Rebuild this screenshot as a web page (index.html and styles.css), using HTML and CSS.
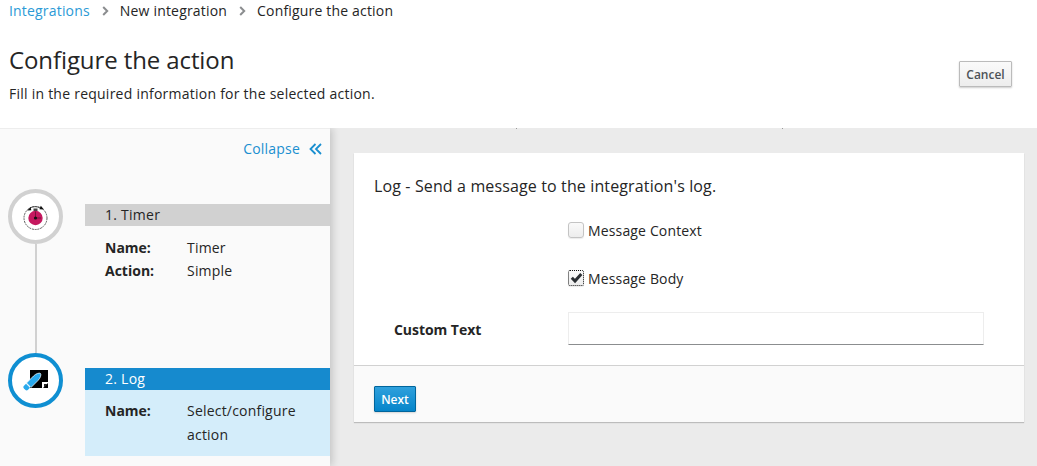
FILE: index.html
```html
<!DOCTYPE html>
<html lang="en">
<head>
<meta charset="utf-8">
<title>Configure the action</title>
<link rel="stylesheet" href="styles.css">
</head>
<body>
<header class="page-head">
  <nav class="crumbs">
    <a class="crumb-link">Integrations</a>
    <svg class="crumb-sep" width="7" height="10" viewBox="0 0 7 10"><path d="M1.200 1 5.200 5 1.200 9" fill="none" stroke="#8b8d8f" stroke-width="2"/></svg>
    <span>New integration</span>
    <svg class="crumb-sep" width="7" height="10" viewBox="0 0 7 10"><path d="M1.200 1 5.200 5 1.200 9" fill="none" stroke="#8b8d8f" stroke-width="2"/></svg>
    <span>Configure the action</span>
  </nav>
  <div class="title-row">
    <div>
      <h1>Configure the action</h1>
      <p class="subtitle">Fill in the required information for the selected action.</p>
    </div>
    <button class="btn btn-default">Cancel</button>
  </div>
</header>
<main class="workspace">
  <aside class="sidebar">
    <div class="collapse-row">
      <span>Collapse</span>
      <svg class="collapse-icon" width="13" height="12" viewBox="0 0 13 12"><path d="M6.500 1 1.500 6l5 5M12 1 7 6l5 5" fill="none" stroke="#1a8fd0" stroke-width="1.800"/></svg>
    </div>
    <section class="step step-one">
      <div class="rail">
        <div class="node">
          <svg width="28" height="28" viewBox="0 0 28 28">
            <circle cx="13.500" cy="15" r="11.500" fill="none" stroke="#333" stroke-width=".8" stroke-dasharray="2 .8"/>
            <path d="M8 5c3-1.800 7-1.800 10 0" fill="none" stroke="#333" stroke-width=".8"/>
            <path d="M22 6.500 17.500 6.300 18.800 2.800z" fill="#111"/>
            <path d="M5.300 7.500 9.300 7.300 8.600 4z" fill="#111"/>
            <rect x="11.500" y="5.500" width="4" height="2.500" fill="#444"/>
            <circle cx="13.500" cy="15" r="7.200" fill="#c5185f"/>
            <path d="M13.500 15h5.500M13.500 15v-6.500" stroke="#5a0c2e" stroke-width=".7"/>
            <circle cx="13.500" cy="15" r="1.600" fill="#111"/>
          </svg>
        </div>
        <div class="line"></div>
      </div>
      <div class="info">
        <div class="bar bar-grey">1. Timer</div>
        <dl class="details">
          <dt>Name:</dt><dd>Timer</dd>
          <dt>Action:</dt><dd>Simple</dd>
        </dl>
      </div>
    </section>
    <section class="step step-two">
      <div class="rail">
        <div class="node node-active">
          <svg width="26" height="24" viewBox="0 0 26 24">
            <rect x="7" y="1" width="18" height="18" fill="#000"/>
            <path d="M19 19v-6h6v1l-5 5z" fill="#fff"/>
            <path d="M21 15h3.500L21 18.500z" fill="#222"/>
            <path d="M3.500 14 10.500 7c2.500-2.500 6-3.500 7-2.500s0 4.500-2.500 7L8 18.500z" fill="#29a9ec" stroke="#fff" stroke-width=".7"/>
            <path d="M.8 17 3 14.800 7 18.800 4.800 21c-.7.600-1.600.600-2.300 0L.8 19.300c-.6-.7-.6-1.600 0-2.300z" fill="#29a9ec"/>
          </svg>
        </div>
      </div>
      <div class="info">
        <div class="bar bar-blue">2. Log</div>
        <dl class="details details-active">
          <dt>Name:</dt><dd>Select/configure action</dd>
        </dl>
      </div>
    </section>
  </aside>
  <section class="content">
    <div class="card">
      <div class="card-body">
        <h2>Log - Send a message to the integration's log.</h2>
        <div class="check-row">
          <span class="checkbox"></span>
          <span>Message Context</span>
        </div>
        <div class="check-row check-row-second">
          <span class="checkbox checkbox-on">
            <svg width="13" height="12" viewBox="0 0 13 12"><path d="M1.800 5.800 5 9 11.300 2" fill="none" stroke="#2b2f33" stroke-width="3"/></svg>
          </span>
          <span>Message Body</span>
        </div>
        <div class="field-row">
          <label>Custom Text</label>
          <input class="text-input" type="text">
        </div>
      </div>
      <div class="card-foot">
        <button class="btn btn-primary">Next</button>
      </div>
    </div>
  </section>
</main>
</body>
</html>
```
FILE: styles.css
```css
* { box-sizing: border-box; }
html, body { margin: 0; height: 466px; overflow: hidden; }
body {
  font-family: "Open Sans", sans-serif;
  font-size: 14px;
  letter-spacing: .15px;
  color: #252525;
  background: #fff;
  display: flex;
  flex-direction: column;
}
.page-head { height: 128px; padding: 0 25px 0 9px; flex: none; }
.crumbs { display: flex; align-items: center; height: 21px; gap: 11px; line-height: 21px; letter-spacing: .18px; }
.crumb-link { color: #2b9ad6; }
.crumb-sep { margin-left: 1px; }
.title-row { display: flex; justify-content: space-between; align-items: flex-start; }
h1 { margin: 0; padding-top: 22px; font-size: 24px; font-weight: 400; line-height: 33px; letter-spacing: -.1px; color: #252525; }
.subtitle { margin: 8px 0 0; line-height: 19px; letter-spacing: .24px; }
.btn {
  font-family: inherit;
  font-size: 12px;
  font-weight: 600;
  letter-spacing: 0;
  border-radius: 1px;
  border: 1px solid;
  cursor: pointer;
}
.btn-default {
  margin-top: 40px;
  width: 53px;
  height: 26px;
  padding: 0;
  color: #4d5258;
  background: linear-gradient(#fafafa, #ededed);
  border-color: #bbb;
  box-shadow: 0 1px 2px rgba(0,0,0,.2);
}
.workspace {
  flex: 1;
  display: flex;
  min-height: 0;
  overflow: hidden;
  background: linear-gradient(#999, #999) 516px 0 / 1px 1px no-repeat,
              linear-gradient(#999, #999) 782px 0 / 1px 1px no-repeat,
              #ebebeb;
}
.sidebar {
  width: 330px;
  flex: none;
  background: #fafafa;
  border-top: 1px solid #ededed;
  box-shadow: 2px 0 8px rgba(0,0,0,.18);
  padding-left: 8px;
}
.collapse-row {
  display: flex;
  justify-content: flex-end;
  align-items: center;
  gap: 9px;
  height: 41px;
  padding: 0 8px 3px 0;
  color: #1a8fd0;
  line-height: 19px;
  letter-spacing: .2px;
}
.collapse-icon { margin-top: 2px; }
.step { display: flex; }
.step-one { margin-top: 19px; height: 164px; }
.rail { width: 77px; flex: none; display: flex; flex-direction: column; }
.node {
  width: 55px;
  height: 55px;
  flex: none;
  border: 4px solid #d1d1d1;
  border-radius: 50%;
  background: #fff;
  display: flex;
  align-items: center;
  justify-content: center;
}
.node-active { border-color: #0f8fd2; }
.line { width: 2px; flex: 1; margin-left: 27px; background: #d1d1d1; }
.info { flex: 1; padding-top: 15px; }
.bar { height: 22px; padding-left: 20px; line-height: 21px; letter-spacing: .25px; }
.bar-grey { background: #d1d1d1; color: #252525; }
.bar-blue { background: #168ace; color: #fff; }
.details {
  margin: 0;
  padding: 12px 20px 0;
  display: grid;
  grid-template-columns: 82px 1fr;
  row-gap: 4px;
  line-height: 19px;
}
.details dt { font-weight: 700; letter-spacing: 0; }
.details dd { margin: 0; letter-spacing: .2px; }
.details-active { background: #d4edfa; height: 66px; padding-top: 9px; line-height: 24px; row-gap: 0; }
.content { flex: 1; padding: 25px 13px 0 24px; }
.card { background: #fff; box-shadow: 0 1px 1px rgba(0,0,0,.2); }
.card-body { height: 212px; padding: 22px 20px 0; }
h2 { margin: 0; font-size: 16px; font-weight: 400; line-height: 22px; letter-spacing: .13px; color: #252525; }
.check-row { display: flex; align-items: center; gap: 4px; margin: 23px 0 0 194px; height: 20px; line-height: 19px; }
.check-row-second { margin-top: 28px; }
.checkbox {
  width: 16px;
  height: 16px;
  border: 1px solid #c4c4c4;
  border-radius: 3px;
  background: linear-gradient(#fafafa, #ededed);
  box-shadow: 0 1px 1px rgba(0,0,0,.08);
  display: flex;
  align-items: center;
  justify-content: center;
}
.checkbox-on { border: 1px dotted #111; border-radius: 2px; }
.field-row { display: flex; align-items: center; margin-top: 24px; }
.field-row label { width: 194px; padding: 2px 0 0 20px; font-weight: 700; letter-spacing: -.05px; }
.text-input {
  width: 416px;
  height: 33px;
  border: 1px solid #ededed;
  border-bottom-color: #8b8d8f;
  background: #fff;
  padding: 0 8px;
  outline: none;
}
.card-foot {
  height: 57px;
  border-top: 1px solid #d1d1d1;
  background: #fafafa;
  padding: 20px 20px 0;
}
.btn-primary {
  display: block;
  width: 42px;
  height: 26px;
  padding: 0;
  color: #fff;
  background: linear-gradient(#2fa0dc, #0585ca);
  border-color: #00659c;
  box-shadow: 0 1px 2px rgba(0,0,0,.15);
}
```
